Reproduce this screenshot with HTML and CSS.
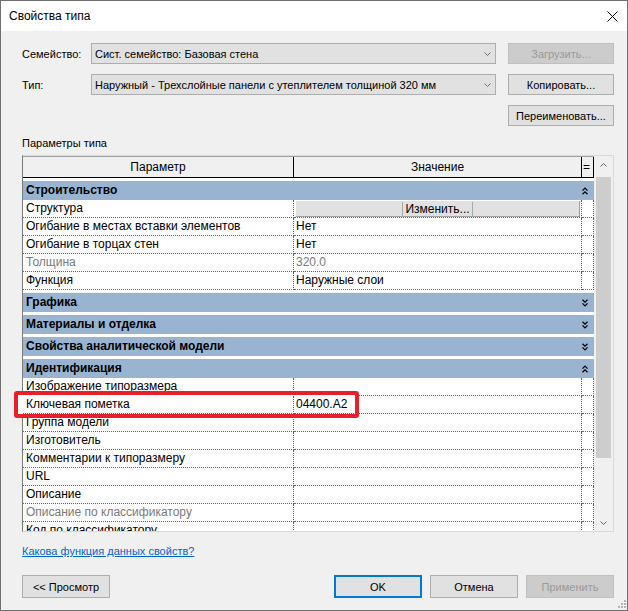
FILE: index.html
```html
<!DOCTYPE html>
<html lang="ru">
<head>
<meta charset="utf-8">
<title>Свойства типа</title>
<link rel="stylesheet" href="styles.css">
</head>
<body>
<div class="window">
  <div class="titlebar">
    <span class="title">Свойства типа</span>
    <svg class="close" width="11" height="11" viewBox="0 0 11 11"><path d="M0.5 0.5 L10.5 10.5 M10.5 0.5 L0.5 10.5" stroke="#000" stroke-width="1" fill="none"/></svg>
  </div>
  <div class="content">
    <div class="form">
      <span class="label">Семейство:</span>
      <div class="combo"><span>Сист. семейство: Базовая стена</span><svg width="7" height="4" viewBox="0 0 7 4"><path d="M0.5 0.5 L3.5 3.5 L6.5 0.5" stroke="#6d6d6d" fill="none"/></svg></div>
      <button class="btn side disabled">Загрузить...</button>
      <span class="label">Тип:</span>
      <div class="combo"><span>Наружный - Трехслойные панели с утеплителем толщиной 320 мм</span><svg width="7" height="4" viewBox="0 0 7 4"><path d="M0.5 0.5 L3.5 3.5 L6.5 0.5" stroke="#6d6d6d" fill="none"/></svg></div>
      <button class="btn side">Копировать...</button>
      <button class="btn side col3">Переименовать...</button>
    </div>

    <div class="section-label">Параметры типа</div>

    <div class="table-box">
      <div class="grid">
        <div class="thead">
          <div class="th">Параметр</div>
          <div class="th">Значение</div>
          <div class="th eq">=</div>
        </div>
        <div class="tbody">
          <div class="group">
            <span class="gname">Строительство</span>
            <svg class="chev" width="6" height="8" viewBox="0 0 6 8"><path d="M0.5 3.6 L3 1.1 L5.5 3.6 M0.5 7.3 L3 4.8 L5.5 7.3" stroke="#000" stroke-width="1.3" fill="none"/></svg>
          </div>
          <div class="row"><div class="c">Структура</div><div class="c val"><div class="edit-btn"><span>Изменить...</span></div></div><div class="c"></div></div>
          <div class="row"><div class="c">Огибание в местах вставки элементов</div><div class="c">Нет</div><div class="c"></div></div>
          <div class="row"><div class="c">Огибание в торцах стен</div><div class="c">Нет</div><div class="c"></div></div>
          <div class="row muted"><div class="c">Толщина</div><div class="c">320.0</div><div class="c"></div></div>
          <div class="row"><div class="c">Функция</div><div class="c">Наружные слои</div><div class="c"></div></div>

          <div class="group">
            <span class="gname">Графика</span>
            <svg class="chev" width="6" height="8" viewBox="0 0 6 8"><path d="M0.5 0.7 L3 3.2 L5.5 0.7 M0.5 4.4 L3 6.9 L5.5 4.4" stroke="#000" stroke-width="1.3" fill="none"/></svg>
          </div>
          <div class="group">
            <span class="gname">Материалы и отделка</span>
            <svg class="chev" width="6" height="8" viewBox="0 0 6 8"><path d="M0.5 0.7 L3 3.2 L5.5 0.7 M0.5 4.4 L3 6.9 L5.5 4.4" stroke="#000" stroke-width="1.3" fill="none"/></svg>
          </div>
          <div class="group">
            <span class="gname">Свойства аналитической модели</span>
            <svg class="chev" width="6" height="8" viewBox="0 0 6 8"><path d="M0.5 0.7 L3 3.2 L5.5 0.7 M0.5 4.4 L3 6.9 L5.5 4.4" stroke="#000" stroke-width="1.3" fill="none"/></svg>
          </div>
          <div class="group">
            <span class="gname">Идентификация</span>
            <svg class="chev" width="6" height="8" viewBox="0 0 6 8"><path d="M0.5 3.6 L3 1.1 L5.5 3.6 M0.5 7.3 L3 4.8 L5.5 7.3" stroke="#000" stroke-width="1.3" fill="none"/></svg>
          </div>
          <div class="row"><div class="c">Изображение типоразмера</div><div class="c"></div><div class="c"></div></div>
          <div class="row"><div class="c">Ключевая пометка</div><div class="c">04400.A2</div><div class="c"></div></div>
          <div class="row"><div class="c">Группа модели</div><div class="c"></div><div class="c"></div></div>
          <div class="row"><div class="c">Изготовитель</div><div class="c"></div><div class="c"></div></div>
          <div class="row"><div class="c">Комментарии к типоразмеру</div><div class="c"></div><div class="c"></div></div>
          <div class="row"><div class="c">URL</div><div class="c"></div><div class="c"></div></div>
          <div class="row"><div class="c">Описание</div><div class="c"></div><div class="c"></div></div>
          <div class="row muted"><div class="c">Описание по классификатору</div><div class="c"></div><div class="c"></div></div>
          <div class="row"><div class="c">Код по классификатору</div><div class="c"></div><div class="c"></div></div>
        </div>
      </div>
      <div class="scrollbar">
        <div class="sb-btn"><svg width="7" height="4" viewBox="0 0 7 4"><path d="M0.5 3.5 L3.5 0.5 L6.5 3.5" stroke="#606060" fill="none"/></svg></div>
        <div class="sb-track"><div class="sb-thumb"></div></div>
        <div class="sb-btn"><svg width="7" height="4" viewBox="0 0 7 4"><path d="M0.5 0.5 L3.5 3.5 L6.5 0.5" stroke="#606060" fill="none"/></svg></div>
      </div>
    </div>

    <div class="help-row"><a class="help" href="#">Какова функция данных свойств?</a></div>

    <div class="footer">
      <button class="btn fbtn">&lt;&lt; Просмотр</button>
      <div class="spacer"></div>
      <button class="btn fbtn default">OK</button>
      <button class="btn fbtn">Отмена</button>
      <button class="btn fbtn disabled">Применить</button>
    </div>
  </div>

  <div class="highlight"></div>
  <svg class="grip" width="9" height="9" viewBox="0 0 9 9">
    <rect x="7" y="1" width="2" height="2" fill="#b4b4b4"/>
    <rect x="4" y="4" width="2" height="2" fill="#b4b4b4"/>
    <rect x="7" y="4" width="2" height="2" fill="#b4b4b4"/>
    <rect x="1" y="7" width="2" height="2" fill="#b4b4b4"/>
    <rect x="4" y="7" width="2" height="2" fill="#b4b4b4"/>
    <rect x="7" y="7" width="2" height="2" fill="#b4b4b4"/>
  </svg>
</div>
</body>
</html>
```

FILE: styles.css
```css
* { box-sizing: border-box; }

html, body {
  margin: 0;
  padding: 0;
}

body {
  width: 628px;
  height: 611px;
  font-family: "Liberation Sans", Arial, sans-serif;
  font-size: 11px;
  color: #000;
  background: #fff;
}

.window {
  position: relative;
  width: 628px;
  height: 611px;
  border: 1px solid #707070;
  display: flex;
  flex-direction: column;
  background: #f0f0f0;
  overflow: hidden;
}

.titlebar {
  height: 30px;
  flex: none;
  background: #fff;
  display: flex;
  align-items: center;
  justify-content: space-between;
  padding: 0 9px 0 8px;
}

.title {
  font-size: 12px;
}

.close {
  display: block;
}

.content {
  flex: 1;
  display: flex;
  flex-direction: column;
  padding: 12px 13px 0 21px;
}

.form {
  display: grid;
  grid-template-columns: 69px 405px 118px;
  grid-auto-rows: 21px;
  column-gap: 0;
  row-gap: 10px;
  align-items: center;
}

.label {
  white-space: nowrap;
}

.combo {
  height: 21px;
  display: flex;
  align-items: center;
  justify-content: space-between;
  background: #e1e1e1;
  border: 1px solid #adadad;
  padding: 0 4px 0 3px;
  white-space: nowrap;
  overflow: hidden;
}

.combo svg {
  display: block;
  flex: none;
}

.btn {
  height: 21px;
  font-family: inherit;
  font-size: 11px;
  background: #e1e1e1;
  border: 1px solid #adadad;
  padding: 0;
  margin: 0;
  color: #000;
  white-space: nowrap;
}

.btn.side {
  width: 106px;
  justify-self: end;
}

.btn.disabled {
  background: #cccccc;
  border-color: #bfbfbf;
  color: #9a9a9a;
}

.btn.col3 {
  grid-column: 3;
}

.section-label {
  margin-top: 10px;
  line-height: 14px;
}

.table-box {
  margin-top: 5px;
  height: 377px;
  flex: none;
  display: flex;
  border: 1px solid #d9d9d9;
  border-left-color: #7a7a7a;
  background: #fff;
}

.grid {
  width: 571px;
  flex: none;
  display: flex;
  flex-direction: column;
  overflow: hidden;
  font-size: 12px;
}

.thead {
  display: grid;
  grid-template-columns: 271px 288px 12px;
  height: 22px;
  flex: none;
  background: #f0f0f0;
  border-top: 1px solid #a0a0a0;
  border-bottom: 1px solid #000;
}

.th {
  border-right: 1px solid #000;
  text-align: center;
  line-height: 20px;
}

.th.eq {
  text-align: left;
  padding-left: 1px;
}

.tbody {
  flex: 1;
  overflow: hidden;
  background: #fff;
}

.group {
  display: grid;
  grid-template-columns: 559px 12px;
  align-items: center;
  height: 19px;
  margin-top: 3px;
  background: #99b4d1;
  font-weight: bold;
}

.gname {
  padding-left: 3px;
  line-height: 19px;
}

.chev {
  display: block;
}

.row {
  display: grid;
  grid-template-columns: 271px 288px 12px;
  height: 18px;
}

.c {
  border-right: 1px dotted #666;
  border-bottom: 1px dotted #666;
  line-height: 17px;
  padding-left: 3px;
  white-space: nowrap;
  overflow: hidden;
}

.row .c:nth-child(2) {
  padding-left: 2px;
}

.row.muted .c {
  color: #7a7a7a;
}

.c.val {
  padding: 1px 1px 0 1px;
}

.edit-btn {
  height: 16px;
  background: #e1e1e1;
  border-right: 1px solid #a0a0a0;
  border-bottom: 1px solid #a0a0a0;
  display: flex;
  justify-content: center;
  align-items: center;
}

.edit-btn span {
  border-left: 1px solid #a8a8a8;
  border-right: 1px solid #a8a8a8;
  padding: 0 2px;
  line-height: 14px;
}

.scrollbar {
  width: 19px;
  flex: none;
  display: flex;
  flex-direction: column;
  background: #f0f0f0;
}

.sb-btn {
  height: 17px;
  flex: none;
  display: flex;
  align-items: center;
  justify-content: center;
}

.sb-track {
  flex: 1;
  padding: 4px 2px 0 2px;
}

.sb-thumb {
  height: 281px;
  background: #cdcdcd;
}

.help-row {
  margin-top: 11px;
  line-height: 16px;
}

.help {
  color: #0066cc;
  text-decoration: underline;
}

.footer {
  margin-top: 16px;
  display: flex;
  gap: 8px;
}

.spacer {
  flex: 1;
}

.fbtn {
  width: 88px;
  height: 23px;
}

.fbtn.default {
  border: 2px solid #0078d7;
}

.highlight {
  position: absolute;
  left: 13px;
  top: 390px;
  width: 345px;
  height: 27px;
  border: 4px solid #e8202a;
  border-radius: 3px;
  box-shadow: inset 5px 1px 0 #fff;
}

.grip {
  position: absolute;
  right: 1px;
  bottom: 2px;
  display: block;
}
```
